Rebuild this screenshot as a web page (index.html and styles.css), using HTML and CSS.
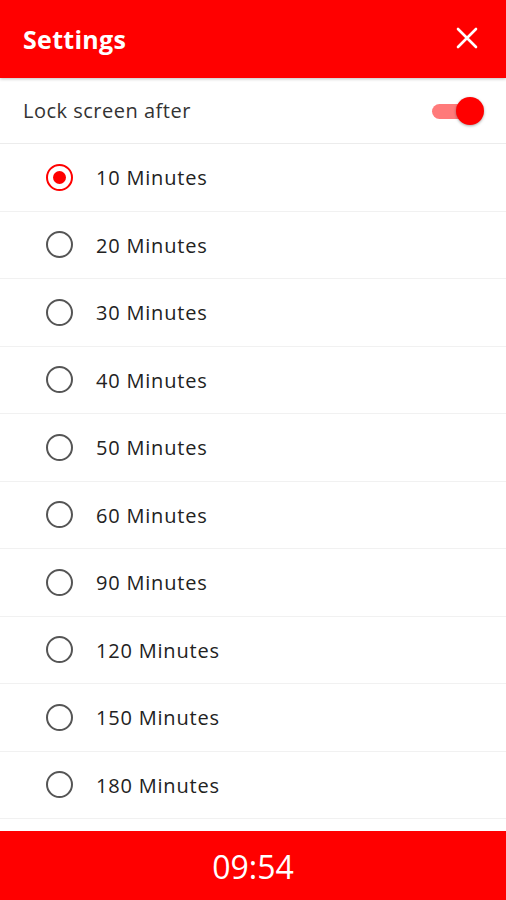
FILE: index.html
```html
<!DOCTYPE html>
<html>
<head>
<meta charset="utf-8">
<link rel="stylesheet" href="styles.css">
</head>
<body>
<div class="app">
  <header class="header">
    <h1 class="title">Settings</h1>
    <svg class="close" width="22" height="22" viewBox="0 0 22 22"><path d="M2 2L20 20M20 2L2 20" stroke="#fff" stroke-width="2.6" stroke-linecap="round"/></svg>
  </header>
  <div class="lock-row">
    <span class="lock-label">Lock screen after</span>
    <div class="toggle"><div class="track"></div><div class="knob"></div></div>
  </div>
  <ul class="options">
    <li class="option selected"><span class="radio"></span><span class="label">10 Minutes</span></li>
    <li class="option"><span class="radio"></span><span class="label">20 Minutes</span></li>
    <li class="option"><span class="radio"></span><span class="label">30 Minutes</span></li>
    <li class="option"><span class="radio"></span><span class="label">40 Minutes</span></li>
    <li class="option"><span class="radio"></span><span class="label">50 Minutes</span></li>
    <li class="option"><span class="radio"></span><span class="label">60 Minutes</span></li>
    <li class="option"><span class="radio"></span><span class="label">90 Minutes</span></li>
    <li class="option"><span class="radio"></span><span class="label">120 Minutes</span></li>
    <li class="option"><span class="radio"></span><span class="label">150 Minutes</span></li>
    <li class="option"><span class="radio"></span><span class="label">180 Minutes</span></li>
  </ul>
  <div class="spacer"></div>
  <footer class="footer">09:54</footer>
</div>
</body>
</html>
```
FILE: styles.css
```css
* { box-sizing: border-box; }
html, body { margin: 0; padding: 0; }
body {
  font-family: "Open Sans", "Noto Sans", sans-serif;
  background: #fff;
  width: 506px;
  height: 900px;
  overflow: hidden;
}
.app { display: flex; flex-direction: column; height: 900px; }
.header {
  height: 78px;
  background: #ff0000;
  display: flex;
  align-items: center;
  justify-content: space-between;
  padding: 0 28px 0 23px;
  box-shadow: 0 1px 3px rgba(0,0,0,0.25);
  position: relative;
  z-index: 1;
}
.title {
  margin: 0;
  color: #fff;
  font-size: 25px;
  font-weight: 700;
  letter-spacing: 0.3px;
}
.close { margin-top: -2px; }
.lock-row {
  height: 66px;
  border-bottom: 1px solid #ececec;
  display: flex;
  align-items: center;
  justify-content: space-between;
  padding: 0 22px 0 23px;
}
.lock-label { font-size: 20px; color: #333; letter-spacing: 0.5px; }
.toggle { position: relative; width: 52px; height: 30px; }
.track {
  position: absolute;
  left: 0; top: 8px;
  width: 40px; height: 15px;
  border-radius: 8px;
  background: #ff7a7a;
}
.knob {
  position: absolute;
  right: 0; top: 1px;
  width: 28px; height: 28px;
  border-radius: 50%;
  background: #ff0000;
  box-shadow: 0 1px 3px rgba(0,0,0,0.35);
}
.options { list-style: none; margin: 0; padding: 0; }
.option {
  height: 67.5px;
  border-bottom: 1.5px solid #f1f1f1;
  display: flex;
  align-items: center;
  padding-left: 46px;
}
.radio {
  width: 27px; height: 27px;
  border-radius: 50%;
  border: 2.2px solid #555;
  margin-right: 23px;
  position: relative;
  flex: none;
}
.selected .radio { border-color: #ff0000; }
.selected .radio::after {
  content: "";
  position: absolute;
  left: 50%; top: 50%;
  width: 13px; height: 13px;
  margin: -6.5px 0 0 -6.5px;
  border-radius: 50%;
  background: #ff0000;
}
.label { font-size: 20px; color: #222; letter-spacing: 0.8px; padding-top: 1px; }
.spacer { flex: 1; }
.footer {
  height: 69px;
  background: #ff0000;
  color: #fff;
  font-size: 32px;
  display: flex;
  align-items: center;
  justify-content: center;
  padding-top: 2px;
}
```
